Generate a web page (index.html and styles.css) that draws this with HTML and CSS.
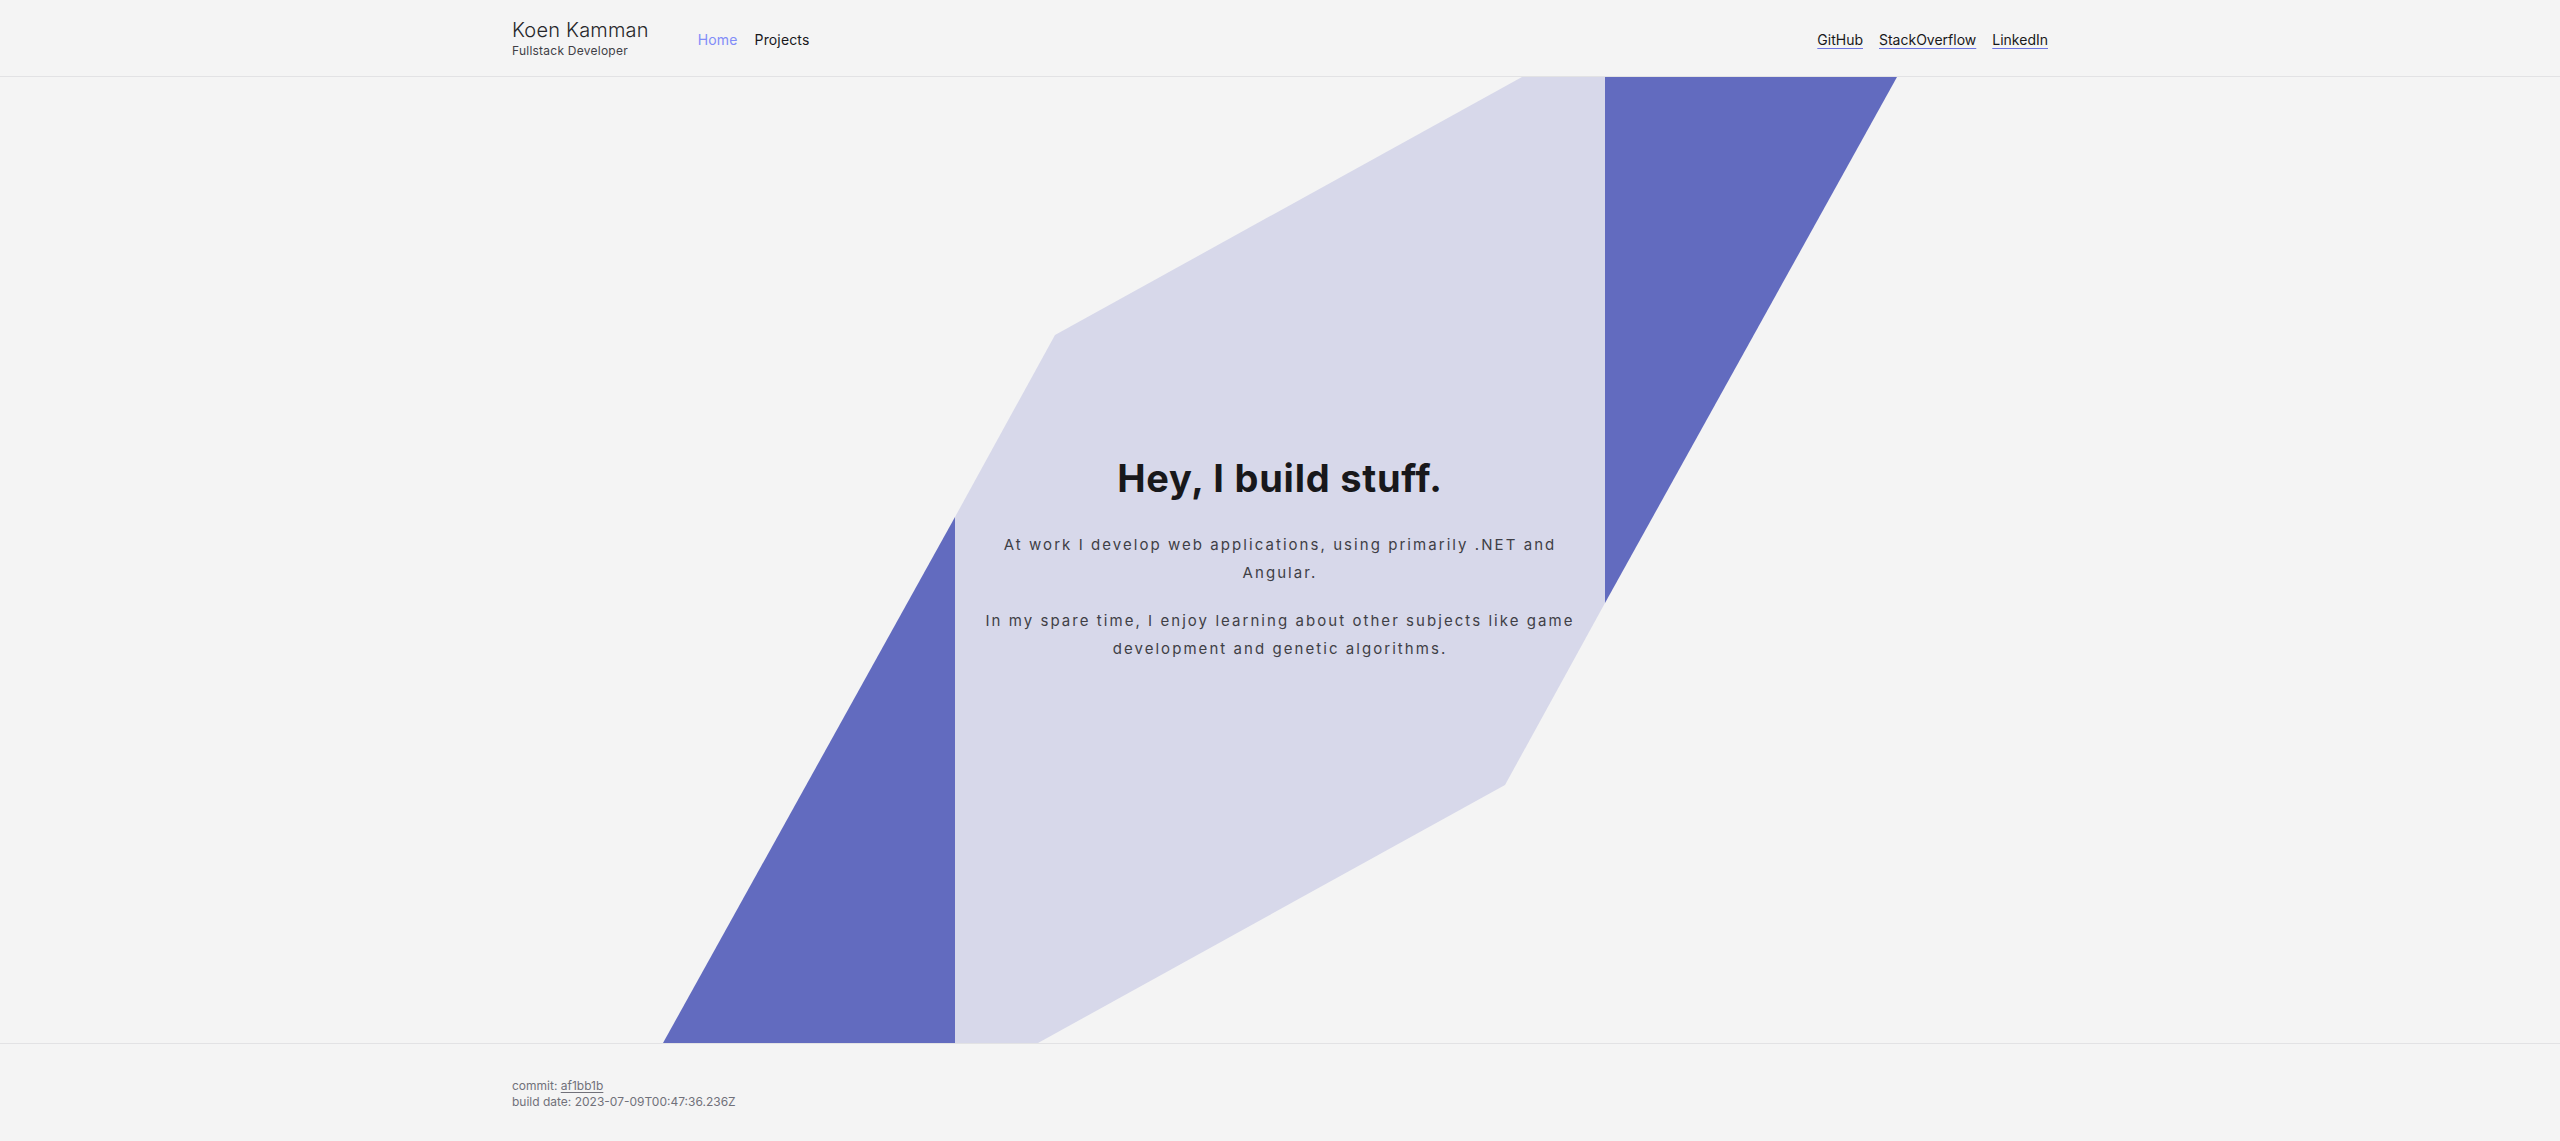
FILE: index.html
```html
<!DOCTYPE html>
<html lang="en">
<head>
<meta charset="utf-8">
<title>Koen Kamman</title>
<link rel="stylesheet" href="styles.css">
</head>
<body>
<div class="page">
  <header class="site-header">
    <div class="container header-inner">
      <div class="brand">
        <div class="brand-name">Koen Kamman</div>
        <div class="brand-role">Fullstack Developer</div>
      </div>
      <nav class="main-nav">
        <a class="nav-link active" href="#">Home</a>
        <a class="nav-link" href="#">Projects</a>
      </nav>
      <nav class="social-nav">
        <a class="social-link" href="#">GitHub</a>
        <a class="social-link" href="#">StackOverflow</a>
        <a class="social-link" href="#">LinkedIn</a>
      </nav>
    </div>
  </header>
  <main class="hero">
    <svg class="hero-bg" viewBox="0 77 2560 966" preserveAspectRatio="none" aria-hidden="true">
      <polygon class="shape-light" points="1522,77 1605,77 1605,603 1505,785 1038,1043 955,1043 955,517 1055,335"/>
      <polygon class="shape-dark" points="1605,77 1897,77 1605,603"/>
      <polygon class="shape-dark" points="663,1043 955,1043 955,517"/>
    </svg>
    <section class="intro">
      <h1 class="intro-title">Hey, I build stuff.</h1>
      <p class="intro-text">At work I develop web applications, using primarily .NET and Angular.</p>
      <p class="intro-text">In my spare time, I enjoy learning about other subjects like game development and genetic algorithms.</p>
    </section>
  </main>
  <footer class="site-footer">
    <div class="container footer-inner">
      <div class="build-line">commit: <a class="commit-link" href="#">af1bb1b</a></div>
      <div class="build-line">build date: 2023-07-09T00:47:36.236Z</div>
    </div>
  </footer>
</div>
</body>
</html>
```

FILE: styles.css
```css
* { box-sizing: border-box; }
html, body { margin: 0; padding: 0; }
body {
  background: #f4f4f4;
  color: #18181b;
  font-family: Inter, "Noto Sans", "Liberation Sans", sans-serif;
}
a { text-decoration: none; color: inherit; }

.page {
  display: flex;
  flex-direction: column;
  min-height: 100vh;
}

.container {
  width: 1536px;
  margin: 0 auto;
}

.site-header {
  height: 77px;
  border-bottom: 1px solid #e2e2e4;
}
.header-inner {
  height: 76px;
  display: flex;
  align-items: center;
}
.brand {
  display: flex;
  flex-direction: column;
  margin-top: 1px;
}
.brand-name {
  font-size: 20px;
  font-weight: 300;
  line-height: 24px;
  letter-spacing: 0.01em;
  color: #27272a;
}
.brand-role {
  font-size: 12px;
  line-height: 18px;
  color: #3f3f46;
  letter-spacing: 0.02em;
}
.main-nav {
  display: flex;
  gap: 17px;
  margin-left: 49px;
  margin-top: 2px;
}
.nav-link {
  font-size: 14px;
  letter-spacing: 0.01em;
  color: #18181b;
}
.nav-link.active { color: #818cf8; }

.social-nav {
  margin-left: auto;
  display: flex;
  gap: 16px;
  margin-top: 2px;
}
.social-link {
  font-size: 14px;
  color: #18181b;
  text-decoration: underline;
  text-decoration-color: #6d74e4;
  text-underline-offset: 3px;
  text-decoration-thickness: 1px;
}

.hero {
  flex: 1;
  position: relative;
  overflow: hidden;
  display: flex;
  align-items: center;
  justify-content: center;
}
.hero-bg {
  position: absolute;
  left: 0;
  top: 0;
  width: 100%;
  height: 100%;
}
.shape-light { fill: #d7d8ea; }
.shape-dark { fill: #626bbf; }

.intro {
  position: relative;
  width: 610px;
  margin-top: -2px;
  text-align: center;
}
.intro-title {
  margin: 0 0 30px;
  font-size: 38px;
  font-weight: 700;
  line-height: 45.6px;
  letter-spacing: 0.02em;
  color: #18181b;
}
.intro-text {
  margin: 0 0 20.5px;
  font-size: 15px;
  line-height: 27.7px;
  letter-spacing: 0.137em;
  color: #3f3f46;
}
.intro-text:last-child { margin-bottom: 0; }

.site-footer {
  height: 98px;
  border-top: 1px solid #e2e2e4;
}
.footer-inner {
  height: 97px;
  display: flex;
  flex-direction: column;
  justify-content: center;
  padding-top: 2px;
}
.build-line {
  font-size: 12px;
  line-height: 16px;
  color: #71717a;
  font-variant-numeric: proportional-nums;
}
.commit-link {
  text-decoration: underline;
  text-underline-offset: 2px;
}
```
